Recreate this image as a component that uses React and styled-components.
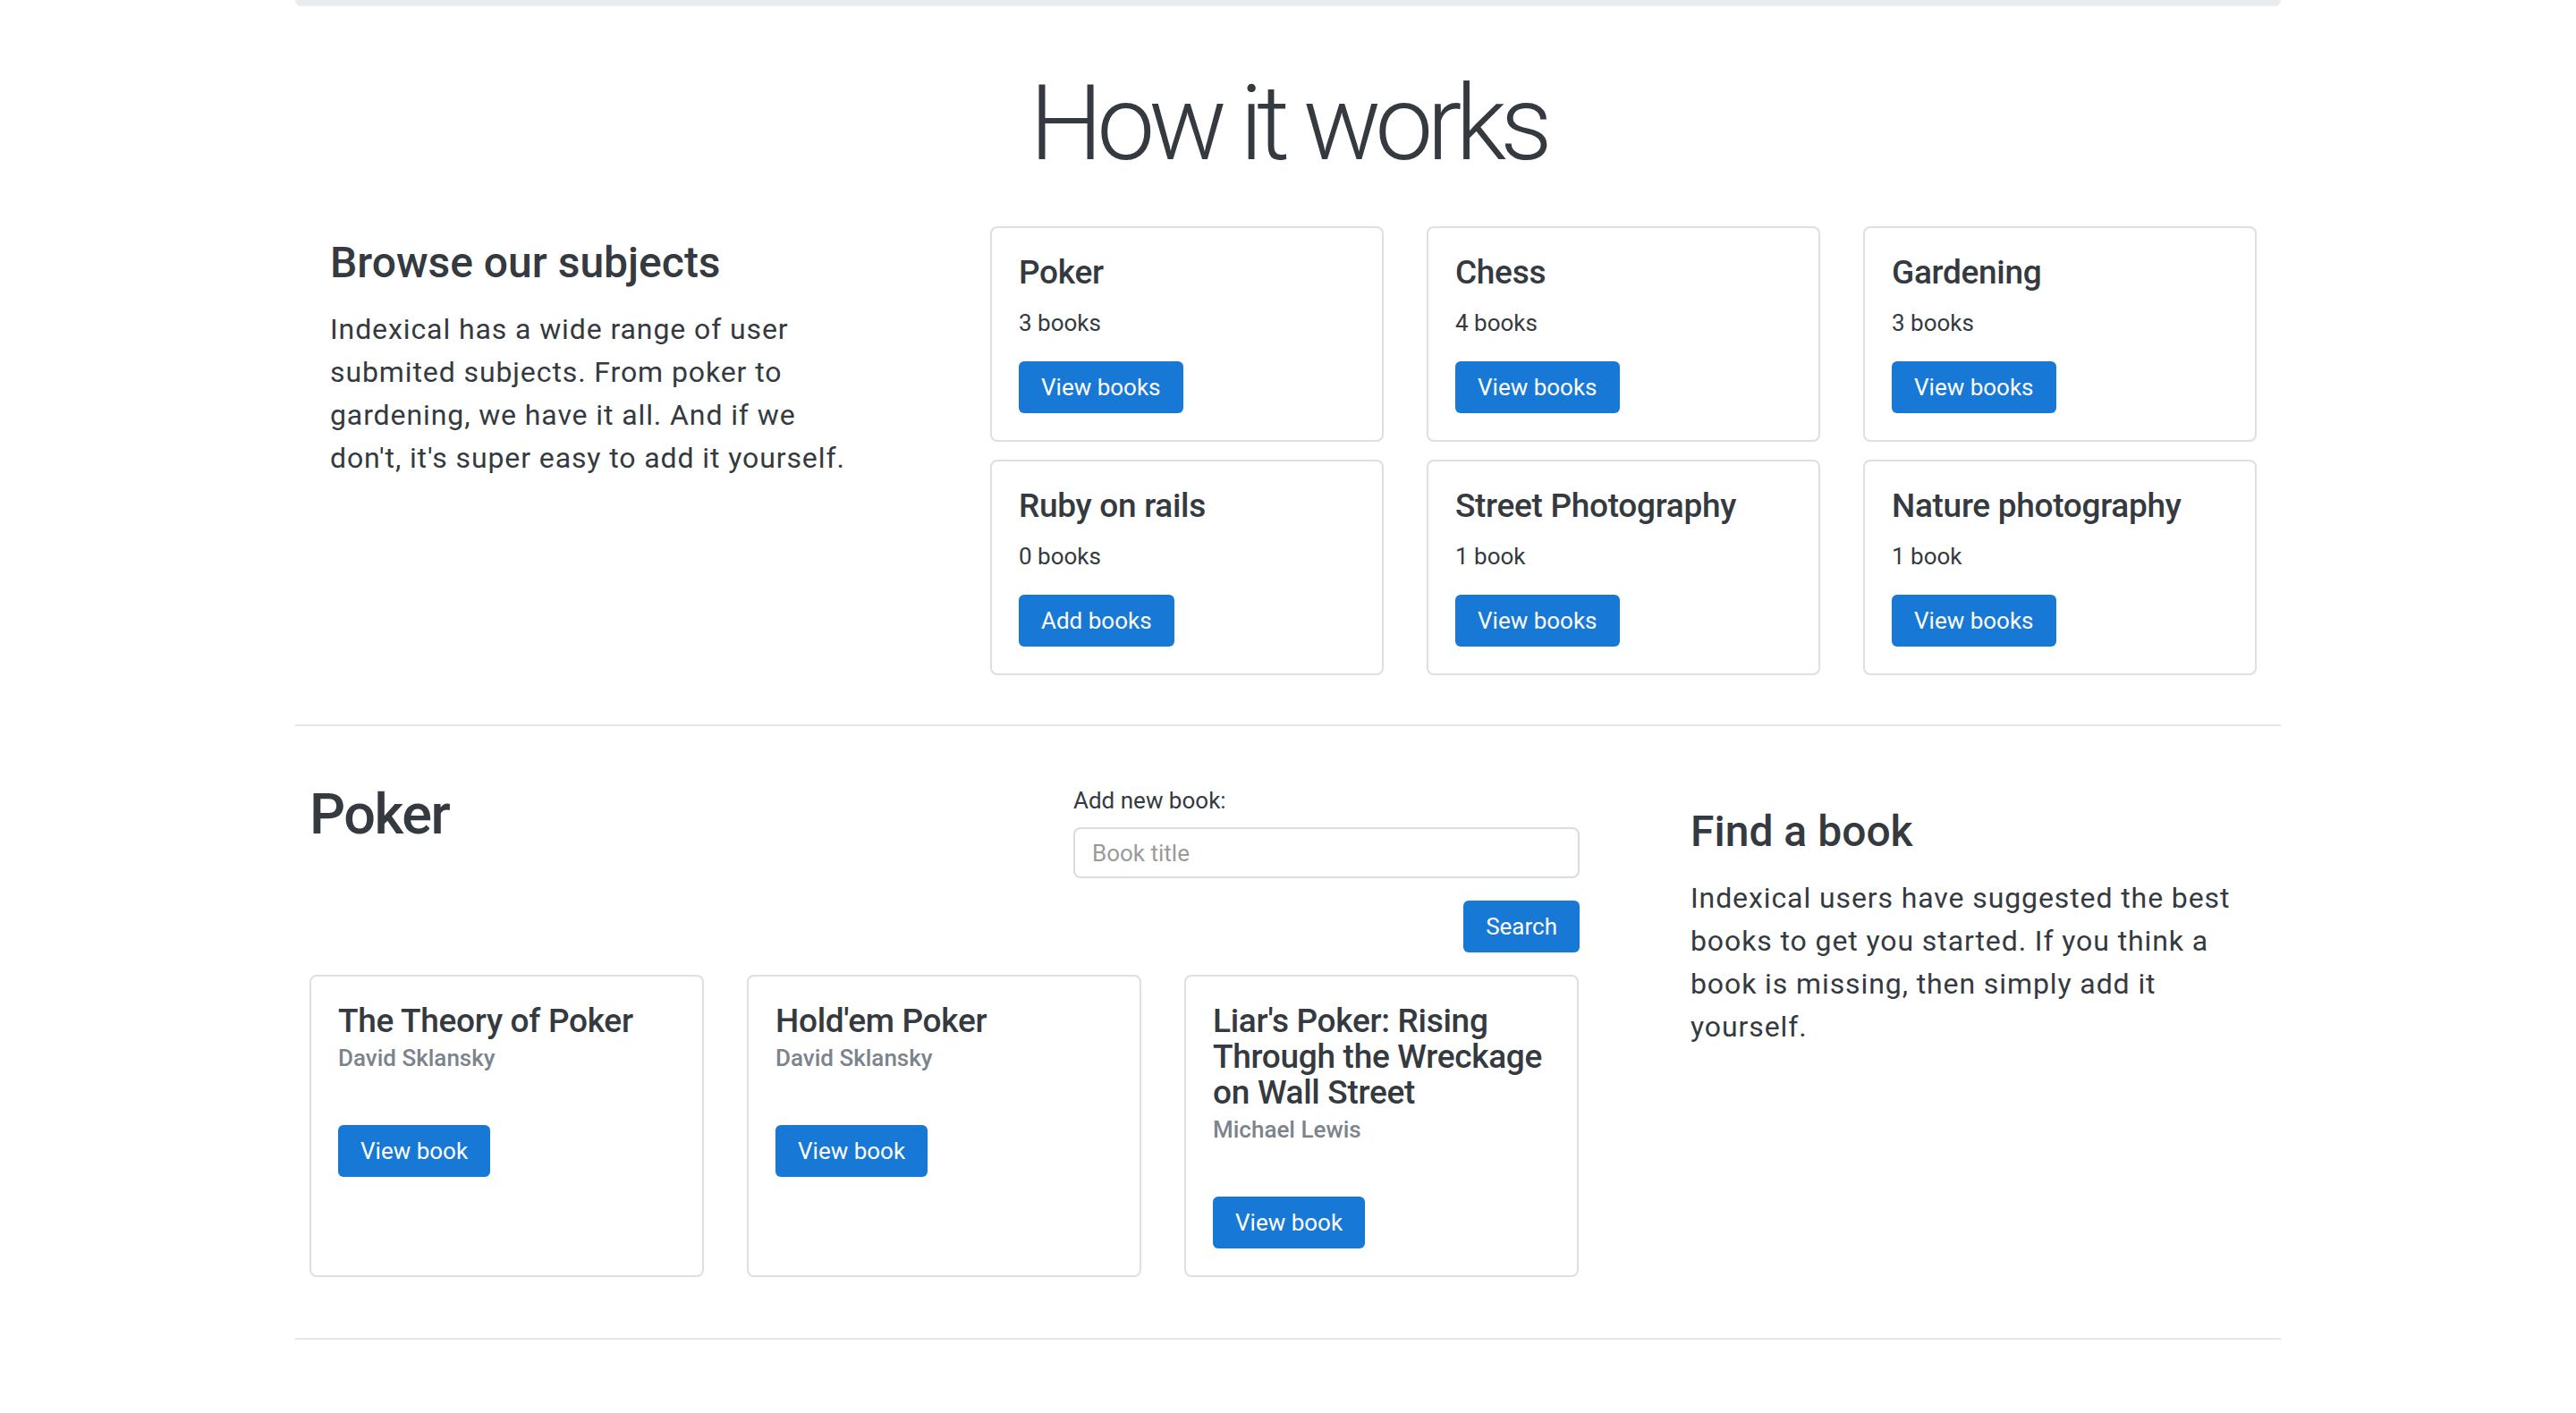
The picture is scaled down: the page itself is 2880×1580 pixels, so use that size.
import React from "react";
import styled, { createGlobalStyle } from "styled-components";

const GlobalStyle = createGlobalStyle`
  body {
    margin: 0;
    background: #fff;
    font-family: Roboto, "Noto Sans", "Liberation Sans", sans-serif;
    color: #343a40;
  }
  * { box-sizing: border-box; }
`;

const Container = styled.div`
  width: 2220px;
  margin: 0 auto;
`;

const TopBar = styled.div`
  height: 7px;
  background: #e9ecef;
  border-radius: 0 0 8px 8px;
`;

const PageTitle = styled.h1`
  margin: 62px 0 45px;
  text-align: center;
  font-size: 116px;
  line-height: 1.2;
  font-weight: 300;
  letter-spacing: -7px;
`;

const TopRow = styled.div`
  display: flex;
  padding: 0 26px 0 39px;
`;

const Intro = styled.div`
  width: 738px;
  padding-top: 12px;
`;

const SectionHeading = styled.h4`
  margin: 0 0 21px;
  font-size: 48px;
  line-height: 1.2;
  font-weight: 500;
`;

const Lead = styled.p`
  margin: 0;
  max-width: ${(p) => p.$width || 600}px;
  font-size: 32px;
  line-height: 48px;
  letter-spacing: 0.9px;
`;

const SubjectGrid = styled.div`
  display: grid;
  grid-template-columns: repeat(3, 440px);
  column-gap: 48px;
  row-gap: 20px;
`;

const Card = styled.div`
  border: 2px solid #dfdfdf;
  border-radius: 8px;
  padding: 30px;
  background: #fff;
`;

const CardTitle = styled.h5`
  margin: 0 0 ${(p) => p.$gap}px;
  font-size: 37px;
  line-height: 40px;
  font-weight: 500;
  letter-spacing: -0.3px;
`;

const Count = styled.div`
  font-size: 26px;
  line-height: 39px;
  margin-bottom: 23px;
`;

const Author = styled.div`
  font-size: 26px;
  line-height: 39px;
  font-weight: 500;
  color: #7b848c;
  margin-bottom: 55px;
`;

const Button = styled.button`
  display: inline-flex;
  align-items: center;
  height: 58px;
  padding: 0 25px;
  border: 0;
  border-radius: 6px;
  background: #1778d5;
  color: #fff;
  font-family: inherit;
  font-size: 26px;
`;

const Rule = styled.hr`
  margin: ${(p) => p.$top}px 0 0;
  border: 0;
  border-top: 2px solid #e6e6e6;
`;

const BottomRow = styled.div`
  display: flex;
  padding: 61px 26px 0 16px;
`;

const Main = styled.div`
  width: 1420px;
`;

const HeaderRow = styled.div`
  display: flex;
  justify-content: space-between;
  align-items: flex-start;
  margin-bottom: 25px;
`;

const SubjectName = styled.h2`
  margin: 0;
  font-size: 63px;
  line-height: 1.2;
  font-weight: 500;
  letter-spacing: -1.5px;
`;

const Form = styled.form`
  width: 566px;
  margin-top: 4px;
  display: flex;
  flex-direction: column;
  align-items: flex-end;
`;

const Label = styled.label`
  align-self: stretch;
  font-size: 26px;
  line-height: 36px;
  margin-bottom: 12px;
`;

const Input = styled.input`
  align-self: stretch;
  height: 57px;
  padding: 0 19px;
  border: 2px solid #dcdcdc;
  border-radius: 8px;
  font-family: inherit;
  font-size: 26px;
  color: #343a40;
  margin-bottom: 25px;
  &::placeholder { color: #9a9a9a; }
`;

const BookGrid = styled.div`
  display: grid;
  grid-template-columns: repeat(3, 441px);
  column-gap: 48px;
`;

const Aside = styled.div`
  flex: 1;
  margin-left: 124px;
  padding-top: 28px;
`;

const subjects = [
  { name: "Poker", count: "3 books", action: "View books" },
  { name: "Chess", count: "4 books", action: "View books" },
  { name: "Gardening", count: "3 books", action: "View books" },
  { name: "Ruby on rails", count: "0 books", action: "Add books" },
  { name: "Street Photography", count: "1 book", action: "View books" },
  { name: "Nature photography", count: "1 book", action: "View books" },
];

const books = [
  { title: "The Theory of Poker", author: "David Sklansky" },
  { title: "Hold'em Poker", author: "David Sklansky" },
  { title: "Liar's Poker: Rising Through the Wreckage on Wall Street", author: "Michael Lewis" },
];

export default function App() {
  return (
    <>
      <GlobalStyle />
      <Container>
        <TopBar />
        <PageTitle>How it works</PageTitle>
        <TopRow>
          <Intro>
            <SectionHeading>Browse our subjects</SectionHeading>
            <Lead $width={600}>
              Indexical has a wide range of user submited subjects. From poker to
              gardening, we have it all. And if we don't, it's super easy to add it yourself.
            </Lead>
          </Intro>
          <SubjectGrid>
            {subjects.map((s) => (
              <Card key={s.name}>
                <CardTitle $gap={17}>{s.name}</CardTitle>
                <Count>{s.count}</Count>
                <Button>{s.action}</Button>
              </Card>
            ))}
          </SubjectGrid>
        </TopRow>
        <Rule $top={55} />
        <BottomRow>
          <Main>
            <HeaderRow>
              <SubjectName>Poker</SubjectName>
              <Form onSubmit={(e) => e.preventDefault()}>
                <Label>Add new book:</Label>
                <Input placeholder="Book title" />
                <Button type="submit">Search</Button>
              </Form>
            </HeaderRow>
            <BookGrid>
              {books.map((b) => (
                <Card key={b.title}>
                  <CardTitle $gap={2}>{b.title}</CardTitle>
                  <Author>{b.author}</Author>
                  <Button>View book</Button>
                </Card>
              ))}
            </BookGrid>
          </Main>
          <Aside>
            <SectionHeading>Find a book</SectionHeading>
            <Lead $width={625}>
              Indexical users have suggested the best books to get you started. If you
              think a book is missing, then simply add it yourself.
            </Lead>
          </Aside>
        </BottomRow>
        <Rule $top={68} />
      </Container>
    </>
  );
}
